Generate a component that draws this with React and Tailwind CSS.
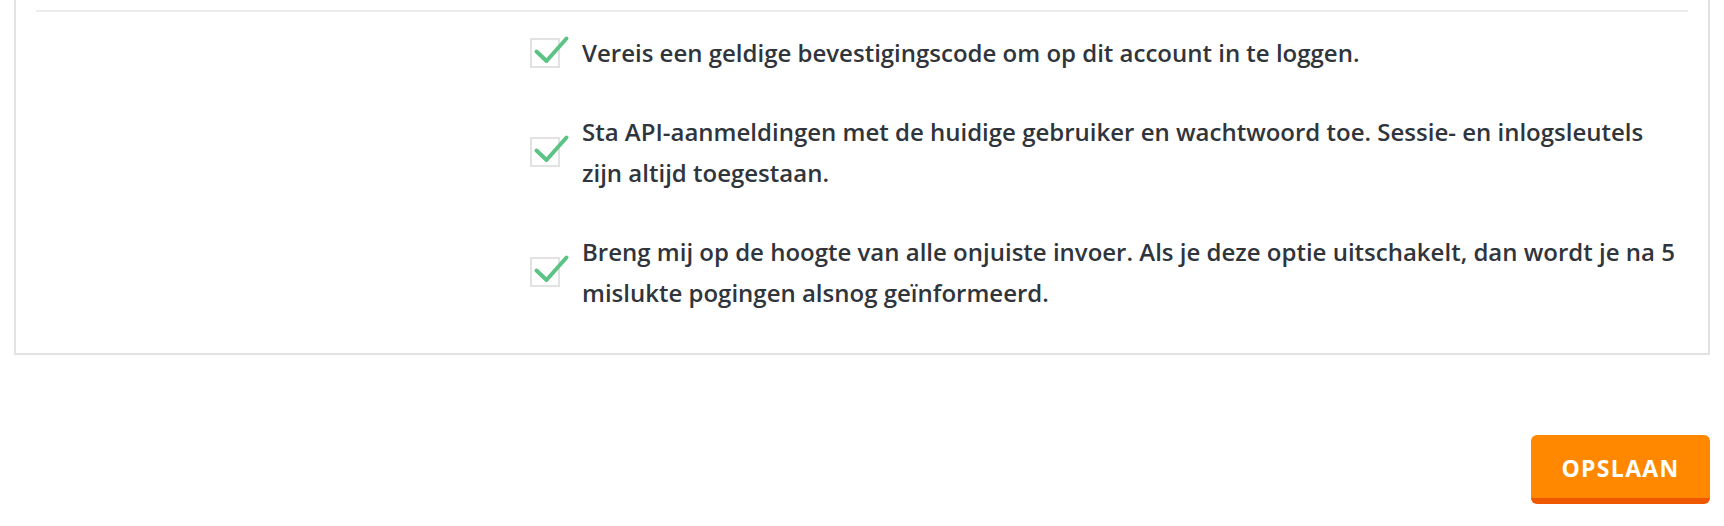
import React from "react";

const options = [
  {
    label: "Vereis een geldige bevestigingscode om op dit account in te loggen.",
  },
  {
    label:
      "Sta API-aanmeldingen met de huidige gebruiker en wachtwoord toe. Sessie- en inlogsleutels zijn altijd toegestaan.",
  },
  {
    label:
      "Breng mij op de hoogte van alle onjuiste invoer. Als je deze optie uitschakelt, dan wordt je na 5 mislukte pogingen alsnog geïnformeerd.",
  },
];

function CheckBox() {
  return (
    <span className="relative block w-[30px] h-[30px] shrink-0 border-2 border-[#e2e2e2] bg-white">
      <svg
        className="absolute left-[-2px] top-[-5px] overflow-visible"
        width="40"
        height="32"
        viewBox="0 0 40 32"
        fill="none"
      >
        <path
          d="M6.5 16.5 L16.5 26 L36.5 3.5"
          stroke="#5bc383"
          strokeWidth="4"
          strokeLinecap="round"
          strokeLinejoin="round"
        />
      </svg>
    </span>
  );
}

export default function App() {
  return (
    <div
      className="min-h-screen bg-white px-[14px] text-[#30353c]"
      style={{ fontFamily: '"Open Sans", "Noto Sans", sans-serif' }}
    >
      <div className="border-2 border-t-0 border-[#e2e2e2] px-[20px] pt-[10px] pb-[40px]">
        <div className="h-[2px] bg-[#ececec]" />
        <div className="grid grid-cols-[494px_1fr] pt-[20px]">
          <div />
          <div className="flex flex-col gap-[38px]">
            {options.map((opt, i) => (
              <label key={i} className="flex items-center gap-[22px]">
                <CheckBox />
                <span className="text-[24px] leading-[41px] font-semibold pr-[10px]">
                  {opt.label}
                </span>
              </label>
            ))}
          </div>
        </div>
      </div>
      <div className="flex justify-end pt-[80px]">
        <button className="w-[179px] h-[69px] rounded-[6px] bg-[#ff8800] border-b-[6px] border-[#f05800] text-white font-bold text-[23px] tracking-[1.3px] pt-[4px]">
          OPSLAAN
        </button>
      </div>
    </div>
  );
}
